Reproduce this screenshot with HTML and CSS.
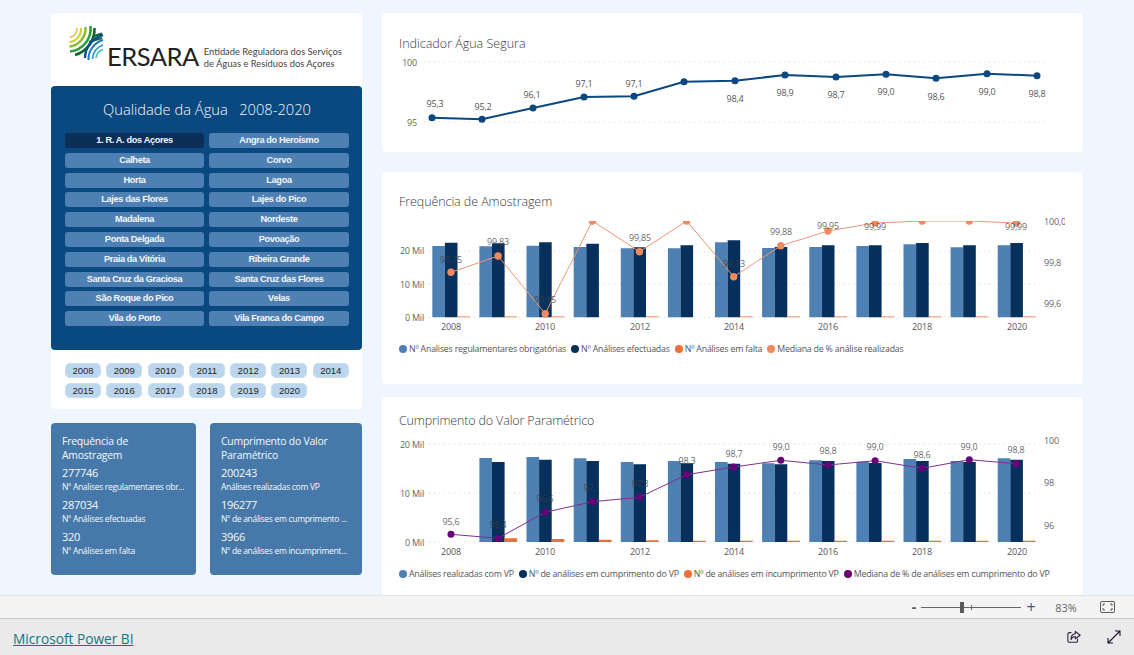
FILE: index.html
```html
<!DOCTYPE html>
<html lang="pt">
<head>
<meta charset="utf-8">
<title>Qualidade da Água</title>
<link rel="stylesheet" href="styles.css">
</head>
<body>
<div class="app">
  <main class="report">
    <section class="left">
      <div class="nav-card">
        <div class="logo">
          <svg class="logo-mark" viewBox="0 0 36 36" aria-hidden="true">
            <g fill="none">
              <path d="M2 12.5A9 9 0 0 0 9 3" stroke="#f2b233" stroke-width="1.4"/>
              <path d="M1.5 17A13 13 0 0 0 13 3" stroke="#c9d234" stroke-width="2"/>
              <path d="M1.5 21.5A18 18 0 0 0 17.5 2" stroke="#8cbb2e" stroke-width="2.4"/>
              <path d="M2 26.5A23 23 0 0 0 22.5 1" stroke="#2f9a3a" stroke-width="2.6"/>
              <path d="M7 30A27 27 0 0 0 26.5 3" stroke="#14632f" stroke-width="2.6"/>
              <path d="M26 11L34 8.5M21 17L34 13" stroke="#14632f" stroke-width="2"/>
              <path d="M35 10A24 24 0 0 0 17 33" stroke="#0d4f8f" stroke-width="2.4"/>
              <path d="M35 15A20 20 0 0 0 20.5 35" stroke="#1d78b8" stroke-width="2"/>
              <path d="M35 20A15 15 0 0 0 24.5 34" stroke="#2a9cc9" stroke-width="1.8"/>
              <path d="M35 24.5A10 10 0 0 0 28 33" stroke="#45bfb5" stroke-width="1.5"/>
            </g>
          </svg>
          <span class="logo-word">ERSARA</span>
          <span class="logo-tag">Entidade Reguladora dos Serviços<br>de Águas e Resíduos dos Açores</span>
        </div>
        <div class="panel">
          <h1 class="panel-title">Qualidade da Água   2008-2020</h1>
          <div class="places">
            <span class="place place-on">1. R. A. dos Açores</span>
            <span class="place">Angra do Heroísmo</span>
            <span class="place">Calheta</span>
            <span class="place">Corvo</span>
            <span class="place">Horta</span>
            <span class="place">Lagoa</span>
            <span class="place">Lajes das Flores</span>
            <span class="place">Lajes do Pico</span>
            <span class="place">Madalena</span>
            <span class="place">Nordeste</span>
            <span class="place">Ponta Delgada</span>
            <span class="place">Povoação</span>
            <span class="place">Praia da Vitória</span>
            <span class="place">Ribeira Grande</span>
            <span class="place">Santa Cruz da Graciosa</span>
            <span class="place">Santa Cruz das Flores</span>
            <span class="place">São Roque do Pico</span>
            <span class="place">Velas</span>
            <span class="place">Vila do Porto</span>
            <span class="place">Vila Franca do Campo</span>
          </div>
        </div>
        <div class="years">
          <span class="year">2008</span><span class="year">2009</span><span class="year">2010</span><span class="year">2011</span><span class="year">2012</span><span class="year">2013</span><span class="year">2014</span>
          <span class="year">2015</span><span class="year">2016</span><span class="year">2017</span><span class="year">2018</span><span class="year">2019</span><span class="year">2020</span>
        </div>
      </div>
      <div class="stats">
        <div class="stat-card stat-a">
          <h2 class="stat-title">Frequência de Amostragem</h2>
          <p class="stat-num">277746</p><p class="stat-label">Nº Analises regulamentares obr...</p>
          <p class="stat-num">287034</p><p class="stat-label">Nº Análises efectuadas</p>
          <p class="stat-num">320</p><p class="stat-label">Nº Análises em falta</p>
        </div>
        <div class="stat-card stat-b">
          <h2 class="stat-title">Cumprimento do Valor Paramétrico</h2>
          <p class="stat-num">200243</p><p class="stat-label">Análises realizadas com VP</p>
          <p class="stat-num">196277</p><p class="stat-label">Nº de análises em cumprimento ...</p>
          <p class="stat-num">3966</p><p class="stat-label">Nº de análises em incumpriment...</p>
        </div>
      </div>
    </section>

    <section class="right">
      <article class="chart chart-one">
        <h2 class="chart-title title-one">Indicador Água Segura</h2>
        <svg class="plot plot-one" viewBox="382 52 701 100">
          <path class="grid" d="M424 62H1046M424 122H1046"/>
          <text class="axis end" x="417" y="62">100</text>
          <text class="axis end" x="417" y="122">95</text>
          <polyline class="line-blue" points="432,117.7 482,119.3 533,108 584,97 634,96.3 684,81.7 735,80.7 785,75 836,77 886,74.3 936,78.3 987,73.7 1037,75.7"/>
          <g class="dots-blue">
            <circle cx="432" cy="117.7" r="3.5"/><circle cx="482" cy="119.3" r="3.5"/><circle cx="533" cy="108" r="3.5"/><circle cx="584" cy="97" r="3.5"/><circle cx="634" cy="96.3" r="3.5"/><circle cx="684" cy="81.7" r="3.5"/><circle cx="735" cy="80.7" r="3.5"/><circle cx="785" cy="75" r="3.5"/><circle cx="836" cy="77" r="3.5"/><circle cx="886" cy="74.3" r="3.5"/><circle cx="936" cy="78.3" r="3.5"/><circle cx="987" cy="73.7" r="3.5"/><circle cx="1037" cy="75.7" r="3.5"/>
          </g>
          <g class="val">
            <text x="435" y="103">95,3</text><text x="483" y="106">95,2</text><text x="532" y="94">96,1</text><text x="584" y="83">97,1</text><text x="634" y="83">97,1</text><text x="735" y="98">98,4</text><text x="785" y="92">98,9</text><text x="836" y="94">98,7</text><text x="886" y="91">99,0</text><text x="936" y="96">98,6</text><text x="987" y="91">99,0</text><text x="1037" y="93">98,8</text>
          </g>
        </svg>
      </article>

      <article class="chart chart-two">
        <h2 class="chart-title title-two">Frequência de Amostragem</h2>
        <svg class="plot plot-two" viewBox="382 212 701 128">
          <defs>
            <clipPath id="clip-two"><rect x="424" y="221" width="620" height="110"/></clipPath>
            <clipPath id="clip-right"><rect x="1040" y="212" width="25" height="128"/></clipPath>
          </defs>
          <path class="grid" d="M424 251.3H1038M424 284.3H1038M424 317.3H1038"/>
          <text class="axis end" x="424" y="250">20 Mil</text>
          <text class="axis end" x="424" y="284">10 Mil</text>
          <text class="axis end" x="424" y="317">0 Mil</text>
          <path class="bar-light" d="M432.3 317.3V246h12.6V317.3zM479.4 317.3V246.3h12.6V317.3zM526.5 317.3V245.7h12.6V317.3zM573.7 317.3V247h12.6V317.3zM620.8 317.3V248.3h12.6V317.3zM667.9 317.3V248.3h12.6V317.3zM715 317.3V242.3h12.6V317.3zM762.1 317.3V248h12.6V317.3zM809.3 317.3V247h12.6V317.3zM856.4 317.3V246h12.6V317.3zM903.5 317.3V244.3h12.6V317.3zM950.6 317.3V247.3h12.6V317.3zM997.7 317.3V245.3h12.6V317.3z"/>
          <path class="bar-dark" d="M444.9 317.3V242.7h12.6V317.3zM492 317.3V243.3h12.6V317.3zM539.1 317.3V242.3h12.6V317.3zM586.3 317.3V243.7h12.6V317.3zM633.4 317.3V247.3h12.6V317.3zM680.5 317.3V245.3h12.6V317.3zM727.6 317.3V240.3h12.6V317.3zM774.7 317.3V247h12.6V317.3zM821.9 317.3V245.3h12.6V317.3zM869 317.3V245.3h12.6V317.3zM916.1 317.3V243h12.6V317.3zM963.2 317.3V245.3h12.6V317.3zM1010.3 317.3V243h12.6V317.3z"/>
          <path class="bar-orange" d="M457.5 317.3V316.4h12.6V317.3zM504.6 317.3V316.4h12.6V317.3zM551.7 317.3V316.4h12.6V317.3zM646 317.3V316.4h12.6V317.3zM740.2 317.3V316.4h12.6V317.3zM787.3 317.3V316.4h12.6V317.3zM834.5 317.3V316.4h12.6V317.3zM881.6 317.3V316.4h12.6V317.3zM928.7 317.3V316.4h12.6V317.3zM975.8 317.3V316.4h12.6V317.3zM1022.9 317.3V316.4h12.6V317.3z"/>
          <g clip-path="url(#clip-two)">
            <polyline class="line-peach" points="451,272.3 498.1,256 545.2,313.7 592.4,221 639.5,251.7 686.6,221 733.7,276.7 780.8,245.7 828,231 875.1,223 922.2,221 969.3,221 1016.4,223"/>
            <g class="dots-peach">
              <circle cx="451" cy="272.3" r="3.7"/><circle cx="498.1" cy="256" r="3.7"/><circle cx="545.2" cy="313.7" r="3.7"/><circle cx="592.4" cy="221" r="3.7"/><circle cx="639.5" cy="251.7" r="3.7"/><circle cx="686.6" cy="221" r="3.7"/><circle cx="733.7" cy="276.7" r="3.7"/><circle cx="780.8" cy="245.7" r="3.7"/><circle cx="828" cy="231" r="3.7"/><circle cx="875.1" cy="223" r="3.7"/><circle cx="922.2" cy="221" r="3.7"/><circle cx="969.3" cy="221" r="3.7"/><circle cx="1016.4" cy="223" r="3.7"/>
            </g>
          </g>
          <g class="val val-over">
            <text x="451" y="259">99,75</text><text x="498" y="241.7">99,83</text><text x="545" y="299.7">99,55</text><text x="640" y="237.7">99,85</text><text x="734" y="263">99,73</text><text x="781" y="231.7">99,88</text><text x="828" y="225.7">99,95</text><text x="875" y="226">99,99</text><text x="1016" y="226">99,99</text>
          </g>
          <g class="val">
            <text x="451" y="326">2008</text><text x="545" y="326">2010</text><text x="640" y="326">2012</text><text x="734" y="326">2014</text><text x="828" y="326">2016</text><text x="922" y="326">2018</text><text x="1017" y="326">2020</text>
          </g>
          <g clip-path="url(#clip-right)">
            <text class="axis" x="1044" y="221">100,0</text>
            <text class="axis" x="1044" y="262">99,8</text>
            <text class="axis" x="1044" y="303">99,6</text>
          </g>
        </svg>
        <ul class="legend">
          <li class="legend-item"><i class="dot dot-light"></i>Nº Analises regulamentares obrigatórias</li>
          <li class="legend-item"><i class="dot dot-dark"></i>Nº Análises efectuadas</li>
          <li class="legend-item"><i class="dot dot-orange"></i>Nº Análises em falta</li>
          <li class="legend-item"><i class="dot dot-peach"></i>Mediana de % análise realizadas</li>
        </ul>
      </article>

      <article class="chart chart-three">
        <h2 class="chart-title title-three">Cumprimento do Valor Paramétrico</h2>
        <svg class="plot plot-three" viewBox="382 432 701 133">
          <path class="grid" d="M424 444.3H1038M424 493H1038M424 542H1038"/>
          <text class="axis end" x="424" y="444">20 Mil</text>
          <text class="axis end" x="424" y="493">10 Mil</text>
          <text class="axis end" x="424" y="542">0 Mil</text>
          <path class="bar-light" d="M479.4 542V458h12.6V542zM526.5 542V457h12.6V542zM573.7 542V458.3h12.6V542zM620.8 542V462h12.6V542zM667.9 542V461h12.6V542zM715 542V462h12.6V542zM762.1 542V463.3h12.6V542zM809.3 542V460.3h12.6V542zM856.4 542V461.7h12.6V542zM903.5 542V459h12.6V542zM950.6 542V461h12.6V542zM997.7 542V458.3h12.6V542z"/>
          <path class="bar-dark" d="M492 542V462h12.6V542zM539.1 542V459.7h12.6V542zM586.3 542V461h12.6V542zM633.4 542V464.3h12.6V542zM680.5 542V463.3h12.6V542zM727.6 542V463.7h12.6V542zM774.7 542V464.3h12.6V542zM821.9 542V461h12.6V542zM869 542V463h12.6V542zM916.1 542V461h12.6V542zM963.2 542V462h12.6V542zM1010.3 542V459.7h12.6V542z"/>
          <path class="bar-orange" d="M504.6 542V538.3h12.6V542zM551.7 542V539h12.6V542zM598.9 542V539.7h12.6V542zM646 542V540.3h12.6V542zM693.1 542V540.7h12.6V542zM740.2 542V540.7h12.6V542zM787.3 542V540.7h12.6V542zM834.5 542V540.7h12.6V542zM881.6 542V540.7h12.6V542zM928.7 542V540.7h12.6V542zM975.8 542V540.7h12.6V542zM1022.9 542V540.7h12.6V542z"/>
          <polyline class="line-purple" points="451,534.3 498.1,538.3 545.2,512.3 592.4,501.7 639.5,497.3 686.6,474.7 733.7,467 780.8,460.3 828,465 875.1,460.7 922.2,468.3 969.3,459.7 1016.4,463.7"/>
          <g class="dots-purple">
            <circle cx="451" cy="534.3" r="3.5"/><circle cx="498.1" cy="538.3" r="3.5"/><circle cx="545.2" cy="512.3" r="3.5"/><circle cx="592.4" cy="501.7" r="3.5"/><circle cx="639.5" cy="497.3" r="3.5"/><circle cx="686.6" cy="474.7" r="3.5"/><circle cx="733.7" cy="467" r="3.5"/><circle cx="780.8" cy="460.3" r="3.5"/><circle cx="828" cy="465" r="3.5"/><circle cx="875.1" cy="460.7" r="3.5"/><circle cx="922.2" cy="468.3" r="3.5"/><circle cx="969.3" cy="459.7" r="3.5"/><circle cx="1016.4" cy="463.7" r="3.5"/>
          </g>
          <g class="val val-over">
            <text x="451" y="521">95,6</text><text x="498" y="524.3">95,4</text><text x="545" y="498.7">96,6</text><text x="592" y="487.7">97,1</text><text x="640" y="483.3">97,3</text><text x="687" y="460.3">98,3</text><text x="734" y="453">98,7</text><text x="781" y="446.7">99,0</text><text x="828" y="450.7">98,8</text><text x="875" y="446.7">99,0</text><text x="922" y="454.7">98,6</text><text x="969" y="446">99,0</text><text x="1016" y="449.7">98,8</text>
          </g>
          <g class="val">
            <text x="451" y="551">2008</text><text x="545" y="551">2010</text><text x="640" y="551">2012</text><text x="734" y="551">2014</text><text x="828" y="551">2016</text><text x="922" y="551">2018</text><text x="1017" y="551">2020</text>
          </g>
          <text class="axis" x="1044" y="440">100</text>
          <text class="axis" x="1044" y="482">98</text>
          <text class="axis" x="1044" y="525">96</text>
        </svg>
        <ul class="legend">
          <li class="legend-item"><i class="dot dot-light"></i>Análises realizadas com VP</li>
          <li class="legend-item"><i class="dot dot-dark"></i>Nº de análises em cumprimento do VP</li>
          <li class="legend-item"><i class="dot dot-orange"></i>Nº de análises em incumprimento VP</li>
          <li class="legend-item"><i class="dot dot-purple"></i>Mediana de % de análises em cumprimento do VP</li>
        </ul>
      </article>
    </section>
  </main>

  <div class="zoombar">
    <span class="zoom-sign zoom-minus">-</span>
    <span class="slider"><i class="slider-tick"></i><i class="slider-thumb"></i></span>
    <span class="zoom-sign zoom-plus">+</span>
    <span class="zoom-pct">83%</span>
    <svg class="fit" viewBox="0 0 15 12" aria-hidden="true">
      <rect x="0.5" y="0.5" width="14" height="11" rx="1.5" fill="none" stroke="#5c5c5c"/>
      <path d="M3 5V3H5M10 3H12V5M12 7V9H10M5 9H3V7" fill="none" stroke="#5c5c5c"/>
    </svg>
  </div>
  <footer class="footer">
    <a class="brand" href="#">Microsoft Power BI</a>
    <svg class="foot-icon share" viewBox="0 0 16 16" aria-hidden="true">
      <path d="M5 3H2.5A1.5 1.5 0 0 0 1 4.5V12.5A1.5 1.5 0 0 0 2.5 14H10.5A1.5 1.5 0 0 0 12 12.5V10" fill="none" stroke="#2a2040" stroke-width="1.2"/>
      <path d="M9.5 1.5L15 6L9.5 10V7.5C7 7.5 5.5 8.5 4.5 11C4.5 7 6.5 4.5 9.5 4.3Z" fill="none" stroke="#2a2040" stroke-width="1.2" stroke-linejoin="round"/>
    </svg>
    <svg class="foot-icon expand" viewBox="0 0 14 14" aria-hidden="true">
      <path d="M1 13L13 1M8 1H13V6M1 8V13H6" fill="none" stroke="#1d1030" stroke-width="1.1"/>
    </svg>
  </footer>
</div>
</body>
</html>
```
FILE: styles.css
```css
* { box-sizing: border-box; }
html, body { margin: 0; padding: 0; height: 100%; overflow: hidden; }
body { font-family: "Open Sans", "Noto Sans", sans-serif; background: #eff6ff; color: #444; }
h1, h2, p, ul { margin: 0; padding: 0; font-weight: normal; }
ul { list-style: none; }

.app { display: flex; flex-direction: column; height: 655px; }
.report { display: grid; grid-template-columns: 311px 701px; column-gap: 20px; height: 595px; padding: 13px 0 0 51px; overflow: hidden; flex: none; }

.left { display: flex; flex-direction: column; gap: 14px; }
.nav-card { height: 396px; background: #fff; border-radius: 4px; }
.logo { display: flex; align-items: flex-end; height: 73px; padding: 12px 0 0 17px; }
.logo-mark { width: 36px; height: 36px; flex: none; align-self: flex-start; }
.logo-word { font-family: Lato, sans-serif; font-size: 25.5px; line-height: 25px; color: #231f20; margin: 0 5px 17px 3px; letter-spacing: -0.5px; }
.logo-tag { font-family: Lato, sans-serif; font-size: 9.35px; line-height: 12px; color: #444; margin-bottom: 16px; white-space: nowrap; }

.panel { height: 264px; background: #0a4880; border-radius: 4px; padding: 0 13px 0 14px; }
.panel-title { height: 47px; font-size: 14.7px; line-height: 46px; font-weight: 300; color: #f6f9fc; text-align: center; white-space: pre; }
.places { display: grid; grid-template-columns: 139px 140px; column-gap: 5px; row-gap: 4.8px; grid-auto-rows: 15px; }
.place { background: #4e80b3; border-radius: 3px; color: #f4f7fa; font-family: "Liberation Sans", sans-serif; font-weight: bold; font-size: 9.2px; line-height: 15px; letter-spacing: -0.35px; text-align: center; white-space: nowrap; }
.place-on { background: #0b2f58; }

.years { display: grid; grid-template-columns: repeat(7, 36px); column-gap: 5.3px; row-gap: 5px; grid-auto-rows: 15px; padding: 13px 0 0 14px; }
.year { background: #bcd6ee; border: 1px solid #c5dcf4; border-radius: 5px; font-family: "Liberation Sans", sans-serif; font-size: 9.5px; line-height: 13px; color: #252525; text-align: center; }

.stats { display: flex; gap: 14px; }
.stat-card { height: 152px; background: #4678aa; border-radius: 4px; padding: 11px 10px 0 11px; color: #f5f8fb; }
.stat-a { width: 145px; }
.stat-b { width: 152px; }
.stat-title { font-size: 10.4px; line-height: 14px; font-weight: 400; height: 28px; margin-bottom: 2.5px; letter-spacing: -0.2px; }
.stat-num { font-size: 11px; line-height: 16px; letter-spacing: -0.3px; }
.stat-label { font-size: 8.5px; line-height: 12px; height: 16px; white-space: nowrap; letter-spacing: -0.3px; }

.right { display: flex; flex-direction: column; }
.chart { background: #fff; border-radius: 4px; flex: none; }
.chart-one { height: 139px; }
.chart-two { height: 212px; margin-top: 20px; }
.chart-three { height: 225px; margin-top: 13px; border-radius: 4px 4px 0 0; }
.chart-title { padding-left: 17px; font-size: 12.5px; font-weight: 300; color: #3a3a3a; display: flex; align-items: center; }
.title-one { height: 39px; padding-top: 21px; }
.title-two { height: 40px; padding-top: 18px; letter-spacing: -0.08px; }
.title-three { height: 35px; padding-top: 11px; letter-spacing: -0.15px; }
.plot { display: block; width: 701px; }
.plot-one { height: 100px; }
.plot-two { height: 128px; }
.plot-three { height: 133px; }

.plot text { font-family: "Open Sans", sans-serif; font-size: 9px; dominant-baseline: central; letter-spacing: -0.2px; }
.grid { fill: none; stroke: #d9d9d9; stroke-width: 1; stroke-dasharray: 1 4; }
.axis { fill: #666; }
.axis.end { text-anchor: end; }
.val text { fill: #555; text-anchor: middle; }
.val-over text { fill: rgba(60, 60, 60, .8); }
.line-blue { fill: none; stroke: #0a4880; stroke-width: 2; }
.dots-blue { fill: #0a4880; }
.bar-light { fill: #4e80b3; }
.bar-dark { fill: #07315c; }
.bar-orange { fill: #e8703a; }
.line-peach { fill: none; stroke: #ef9673; stroke-width: 1; }
.dots-peach { fill: #ee8a60; }
.line-purple { fill: none; stroke: #803090; stroke-width: 1; }
.dots-purple { fill: #6b007b; }

.legend { display: flex; gap: 5px; height: 18px; align-items: center; padding-left: 17px; }
.legend-item { display: flex; align-items: center; gap: 2px; font-size: 8.8px; color: #555; white-space: nowrap; letter-spacing: -0.2px; }
.dot { width: 8px; height: 8px; border-radius: 50%; flex: none; display: block; }
.dot-light { background: #4e80b3; }
.dot-dark { background: #07315c; }
.dot-orange { background: #e8703a; }
.dot-peach { background: #ee8a60; }
.dot-purple { background: #6b007b; }

.zoombar { flex: none; height: 24px; background: #f4f4f4; border-top: 1px solid #e2e2e2; border-bottom: 1px solid #c8c8c8; display: flex; align-items: center; justify-content: flex-end; padding-right: 19px; }
.zoom-sign { width: 10px; text-align: center; line-height: 20px; color: #555; }
.zoom-minus { font-size: 14px; font-weight: 700; }
.zoom-plus { font-size: 16px; color: #4a5a70; margin-left: 5px; }
.slider { position: relative; width: 100px; height: 1px; background: #666; margin-left: 2px; }
.slider-thumb { position: absolute; left: 39px; top: -5px; width: 4px; height: 11px; background: #5a5a5a; }
.slider-tick { position: absolute; left: 50px; top: -2px; width: 1px; height: 5px; background: #666; }
.zoom-pct { font-size: 11px; color: #666; width: 40px; margin-left: 10px; margin-right: 14px; text-align: center; }
.fit { width: 15px; height: 12px; }

.footer { flex: 1; background: #eaeaea; display: flex; align-items: center; padding: 0 13px 0 13px; }
.brand { font-size: 13.7px; color: #117780; text-decoration: underline; margin: 2px auto 0 0; }
.foot-icon { width: 14px; height: 14px; }
.share { margin-right: 26px; }
```
